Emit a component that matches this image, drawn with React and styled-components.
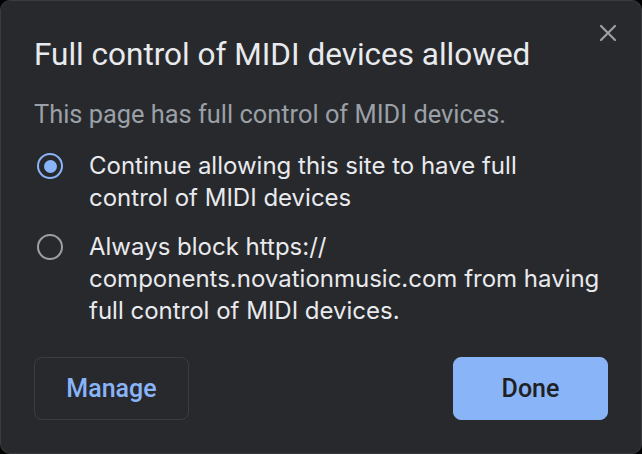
import React, { useState } from 'react'
import styled, { createGlobalStyle } from 'styled-components'

const GlobalStyle = createGlobalStyle`
  html, body {
    margin: 0;
    padding: 0;
    background: #000;
  }
  body {
    width: 642px;
    height: 454px;
    overflow: hidden;
  }
`

const Dialog = styled.div`
  position: relative;
  box-sizing: border-box;
  width: 642px;
  height: 454px;
  background: #28292d;
  border: 1px solid #3a3b3f;
  border-radius: 10px;
  padding: 30px 33px 0 33px;
  display: flex;
  flex-direction: column;
  font-family: Roboto, "Liberation Sans", sans-serif;
`

const CloseButton = styled.button`
  position: absolute;
  top: 20px;
  right: 21px;
  width: 24px;
  height: 24px;
  padding: 0;
  border: none;
  background: none;
  display: flex;
  align-items: center;
  justify-content: center;
  cursor: pointer;
`

const Title = styled.h1`
  margin: 0;
  font-size: 31.5px;
  font-weight: 400;
  line-height: 48px;
  color: #e8eaed;
  white-space: nowrap;
`

const Subtitle = styled.p`
  margin: 19px 0 0;
  font-size: 25.4px;
  line-height: 32px;
  color: #9aa0a6;
  white-space: nowrap;
`

const Options = styled.div`
  margin-top: 20px;
  display: flex;
  flex-direction: column;
  gap: 17px;
`

const Option = styled.label`
  display: flex;
  align-items: flex-start;
  gap: 26px;
  padding-left: 3px;
  cursor: pointer;
`

const Radio = styled.span`
  flex: none;
  box-sizing: border-box;
  margin-top: 3px;
  width: 26px;
  height: 26px;
  border-radius: 50%;
  border: 2.6px solid ${p => (p.$checked ? '#8ab4f8' : '#9aa0a6')};
  display: flex;
  align-items: center;
  justify-content: center;
  &::after {
    content: '';
    width: 13px;
    height: 13px;
    border-radius: 50%;
    background: #8ab4f8;
    display: ${p => (p.$checked ? 'block' : 'none')};
  }
`

const OptionText = styled.span`
  font-family: Inter, "Noto Sans", sans-serif;
  font-size: 24px;
  line-height: 32px;
  color: #e8eaed;
  white-space: nowrap;
`

const Footer = styled.div`
  margin-top: auto;
  margin-bottom: 33px;
  display: flex;
  justify-content: space-between;
`

const Button = styled.button`
  box-sizing: border-box;
  width: 155px;
  height: 63px;
  border-radius: 8px;
  font-family: Roboto, "Liberation Sans", sans-serif;
  font-size: 25px;
  font-weight: 500;
  cursor: pointer;
  border: 1px solid ${p => (p.$primary ? '#8ab4f8' : '#3c3d41')};
  background: ${p => (p.$primary ? '#8ab4f8' : 'transparent')};
  color: ${p => (p.$primary ? '#202124' : '#8ab4f8')};
`

const options = [
  ['Continue allowing this site to have full', 'control of MIDI devices'],
  ['Always block https://', 'components.novationmusic.com from having', 'full control of MIDI devices.'],
]

const App = () => {
  const [selected, setSelected] = useState(0)
  return (
    <>
      <GlobalStyle />
      <Dialog>
        <CloseButton aria-label="Close">
          <svg width="18" height="18" viewBox="0 0 18 18">
            <path d="M2 2 L16 16 M16 2 L2 16" stroke="#9aa0a6" strokeWidth="2.2" strokeLinecap="round" />
          </svg>
        </CloseButton>
        <Title>Full control of MIDI devices allowed</Title>
        <Subtitle>This page has full control of MIDI devices.</Subtitle>
        <Options>
          {options.map((lines, i) => (
            <Option key={i} onClick={() => setSelected(i)}>
              <Radio $checked={selected === i} />
              <OptionText>
                {lines.map((line, j) => (
                  <React.Fragment key={j}>
                    {j > 0 && <br />}
                    {line}
                  </React.Fragment>
                ))}
              </OptionText>
            </Option>
          ))}
        </Options>
        <Footer>
          <Button>Manage</Button>
          <Button $primary>Done</Button>
        </Footer>
      </Dialog>
    </>
  )
}

export default App
